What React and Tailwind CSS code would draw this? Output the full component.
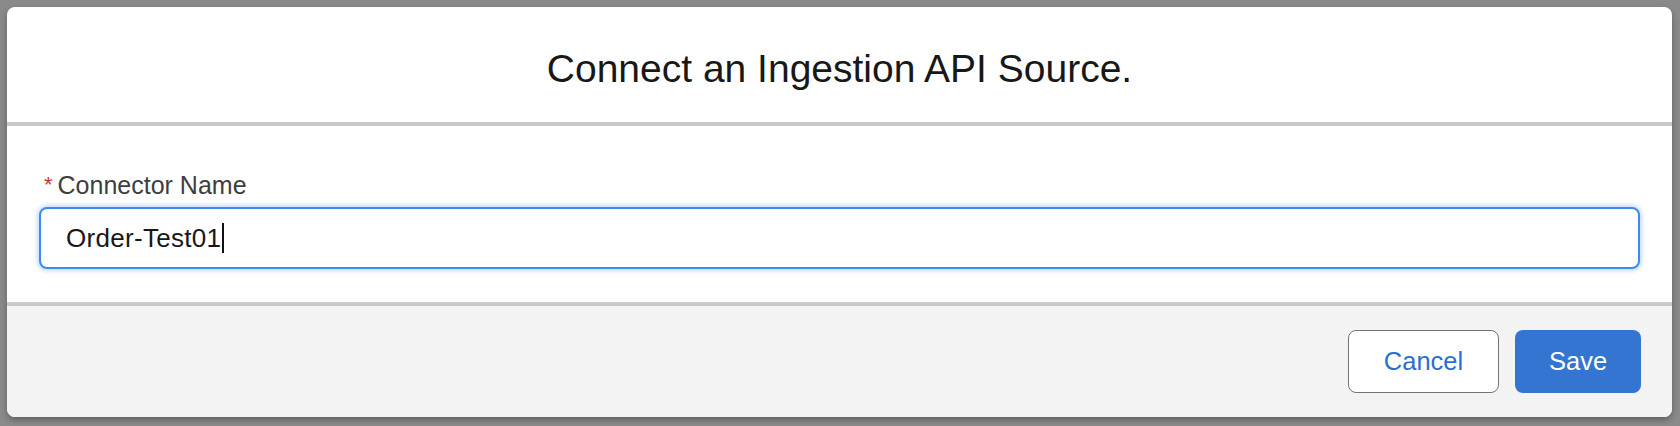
export default function App() {
  return (
    <div className="h-[426px] w-[1680px] bg-[#8a8a8a] pt-[7px] pl-[7px] font-['Liberation_Sans',Arial,sans-serif]">
      <div className="flex w-[1665px] flex-col overflow-hidden rounded-[8px] bg-white shadow-[0_3px_6px_rgba(0,0,0,0.3)]">
        <div className="flex h-[119px] items-center justify-center border-b-4 border-[#c9c9c9] pt-[7px]">
          <h1 className="text-[39px] leading-none text-[#181818]">Connect an Ingestion API Source.</h1>
        </div>

        <div className="h-[176px] px-[32px] pt-[44px]">
          <label className="mb-[7px] flex items-center text-[25px] leading-[30px] text-[#3e3e3e]">
            <span className="mr-[5px] ml-[5px] text-[22px] text-[#c23934]">*</span>
            Connector Name
          </label>
          <div className="flex h-[62px] items-center rounded-[8px] border-2 border-[#3d8bf2] bg-white pl-[25px] text-[26px] tracking-[0.3px] text-[#181818] shadow-[0_0_4px_2px_rgba(61,139,242,0.3)]">
            <span>Order-Test01</span>
            <span className="ml-[1px] h-[30px] w-[2px] bg-[#111]" />
          </div>
        </div>

        <div className="flex h-[115px] items-center justify-end gap-[16px] border-t-4 border-[#c9c9c9] bg-[#f3f3f3] pr-[31px]">
          <button className="h-[63px] w-[151px] rounded-[8px] border-[1.5px] border-[#747474] bg-white text-[25.5px] text-[#2a6fd0]">
            Cancel
          </button>
          <button className="h-[63px] w-[126px] rounded-[8px] bg-[#3375d0] text-[25.5px] text-white">
            Save
          </button>
        </div>
      </div>
    </div>
  );
}
